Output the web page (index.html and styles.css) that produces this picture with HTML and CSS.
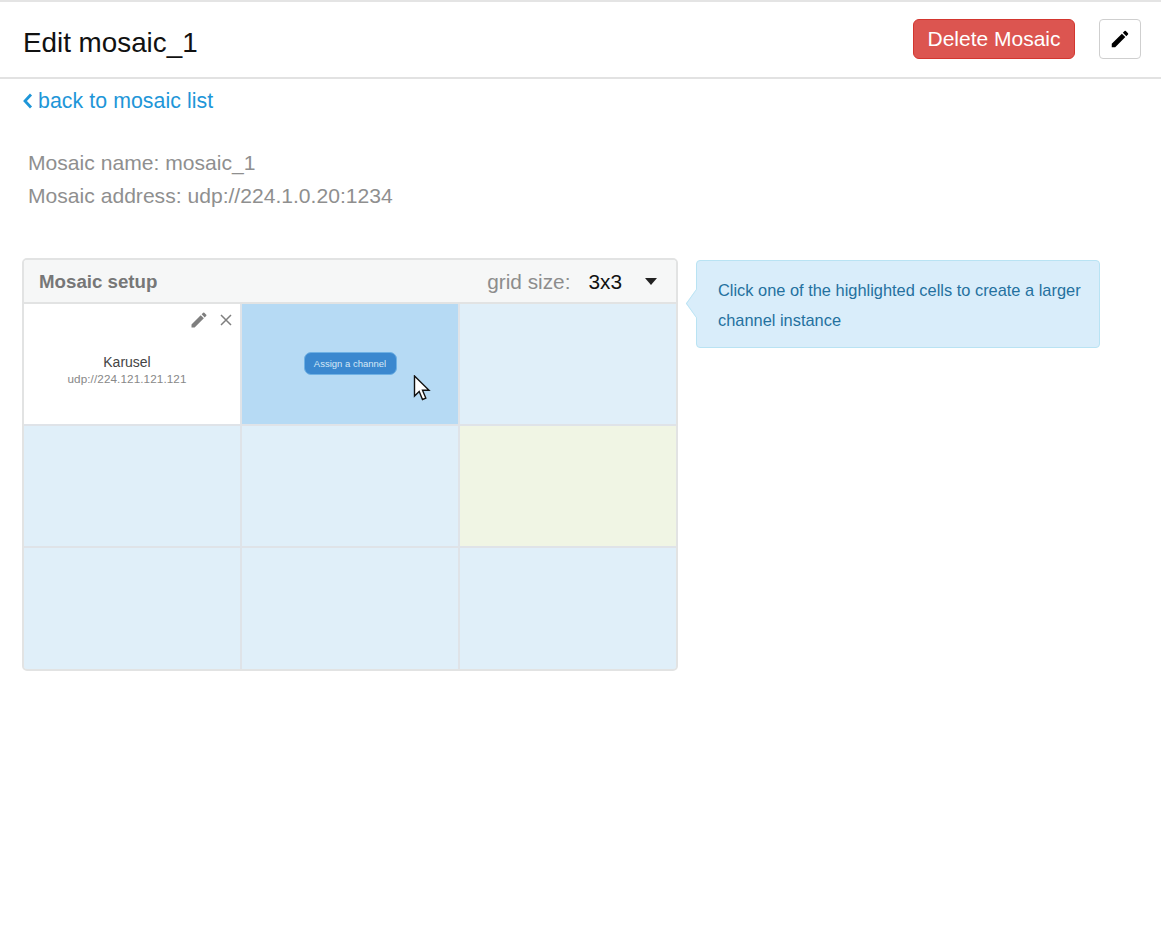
FILE: index.html
```html
<!DOCTYPE html>
<html lang="en">
<head>
<meta charset="utf-8">
<title>Edit mosaic_1</title>
<link rel="stylesheet" href="styles.css">
</head>
<body>
<header class="topbar">
  <h1 class="title">Edit mosaic_1</h1>
  <div class="actions">
    <button class="btn-delete">Delete Mosaic</button>
    <button class="btn-edit" aria-label="Edit">
      <svg width="22" height="22" viewBox="0 0 24 24"><path fill="#000" d="M3 17.25V21h3.75L17.81 9.94l-3.75-3.75L3 17.25zM20.71 7.04a1 1 0 0 0 0-1.41l-2.34-2.34a1 1 0 0 0-1.41 0l-1.83 1.83 3.75 3.75 1.83-1.83z"/></svg>
    </button>
  </div>
</header>
<main class="content">
  <a class="back" href="#">
    <svg class="back-icon" width="11" height="16" viewBox="0 0 11 16"><path d="M9 1.500 3 8l6 6.500" fill="none" stroke="#1e96d8" stroke-width="2.800"/></svg>
    back to mosaic list
  </a>
  <div class="info">
    <p>Mosaic name: mosaic_1</p>
    <p>Mosaic address: udp://224.1.0.20:1234</p>
  </div>
  <div class="workspace">
    <section class="panel">
      <div class="panel-head">
        <span class="panel-title">Mosaic setup</span>
        <div class="grid-size">
          <span class="grid-label">grid size:</span>
          <span class="grid-value">3x3</span>
          <span class="caret"></span>
        </div>
      </div>
      <div class="cells">
        <div class="cell cell-filled">
          <div class="cell-tools">
            <svg width="20" height="20" viewBox="0 0 24 24"><path fill="#7f7f7f" d="M3 17.250V21h3.750L17.810 9.940l-3.750-3.750L3 17.250zM20.710 7.040a1 1 0 0 0 0-1.410l-2.340-2.340a1 1 0 0 0-1.410 0l-1.830 1.830 3.750 3.750 1.830-1.830z"/></svg>
            <svg width="14" height="14" viewBox="0 0 14 14"><path d="M2 2l10 10M12 2 2 12" stroke="#7f7f7f" stroke-width="1.500" fill="none"/></svg>
          </div>
          <div class="channel-name">Karusel</div>
          <div class="channel-addr">udp://224.121.121.121</div>
        </div>
        <div class="cell cell-active">
          <button class="btn-assign">Assign a channel</button>
          <svg class="cursor" width="18" height="27" viewBox="0 0 18 27"><path d="M1.500 1v20l4.700-4.500 3.300 8 3.300-1.400-3.300-7.800h6.500z" fill="#fff" stroke="#111" stroke-width="1.400"/></svg>
        </div>
        <div class="cell"></div>
        <div class="cell"></div>
        <div class="cell"></div>
        <div class="cell cell-green"></div>
        <div class="cell"></div>
        <div class="cell"></div>
        <div class="cell"></div>
      </div>
    </section>
    <aside class="hint">Click one of the highlighted cells to create a larger channel instance</aside>
  </div>
</main>
</body>
</html>
```
FILE: styles.css
```css
* { box-sizing: border-box; }
html, body { margin: 0; padding: 0; }
body {
  background: #fff;
  font-family: "Liberation Sans", Arial, sans-serif;
  color: #000;
  min-height: 931px;
}
.topbar {
  height: 79px;
  border-top: 2px solid #e4e4e4;
  border-bottom: 2px solid #e2e2e2;
  padding: 0 20px 0 23px;
  display: flex;
  align-items: center;
  justify-content: space-between;
}
.title { margin: 6px 0 0; font-size: 27.800px; font-weight: 400; line-height: 34px; color: #111; }
.actions { display: flex; align-items: center; gap: 24px; margin-top: -2px; }
.btn-delete {
  width: 162px;
  height: 40px;
  background: #dc5550;
  border: 1px solid #d3362f;
  border-radius: 6px;
  color: #fff;
  font: 400 21px "Liberation Sans", Arial, sans-serif;
  padding: 0;
}
.btn-edit {
  width: 42px;
  height: 40px;
  background: #fff;
  border: 1px solid #cfcfcf;
  border-radius: 4px;
  padding: 0;
  display: flex;
  align-items: center;
  justify-content: center;
}
.content { padding: 0 0 0 22px; }
.back {
  display: flex;
  align-items: center;
  gap: 5px;
  margin-top: 9px;
  height: 26px;
  color: #1e96d8;
  font-size: 21.300px;
  letter-spacing: .07px;
  text-decoration: none;
}
.info { margin: 32px 0 0 6px; color: #8f8f8f; font-size: 21.100px; line-height: 33px; }
.info p { margin: 0; }
.workspace { display: flex; align-items: flex-start; gap: 18px; margin-top: 46px; }
.panel {
  width: 656px;
  border: 2px solid #e2e3e3;
  border-radius: 5px;
  overflow: hidden;
}
.panel-head {
  height: 44px;
  background: #f6f7f7;
  border-bottom: 2px solid #e2e3e3;
  display: flex;
  align-items: center;
  justify-content: space-between;
  padding: 1px 19px 0 15px;
}
.panel-title { font-size: 18.700px; font-weight: 700; color: #777; }
.grid-size { display: flex; align-items: center; font-size: 20.800px; }
.grid-label { color: #8d8d8d; }
.grid-value { color: #111; margin-left: 18px; }
.caret {
  margin-left: 23px;
  border-left: 6px solid transparent;
  border-right: 6px solid transparent;
  border-top: 7px solid #222;
}
.cells {
  display: grid;
  grid-template-columns: repeat(3, 1fr);
  grid-template-rows: 120px 120px 121px;
  background: #dfe3e8;
  gap: 2px;
}
.cell { background: #e0eff9; position: relative; }
.cell-filled {
  background: #fff;
  display: flex;
  flex-direction: column;
  align-items: center;
  justify-content: center;
  padding: 12px 10px 0 0;
}
.cell-tools {
  position: absolute;
  top: 6px;
  right: 7px;
  display: flex;
  align-items: center;
  gap: 10px;
}
.channel-name { font-size: 14px; color: #444; line-height: 17px; }
.channel-addr { font-size: 11.700px; color: #888; line-height: 15px; letter-spacing: .1px; }
.cell-active {
  background: #b6daf4;
  display: flex;
  align-items: center;
  justify-content: center;
}
.cell-green { background: #f0f5e4; }
.btn-assign {
  width: 93px;
  height: 23px;
  margin-bottom: 1px;
  background: #3b88cf;
  border: 1px solid #6fb1e4;
  border-radius: 7px;
  color: #d5e8f7;
  font: 400 9.500px "Liberation Sans", Arial, sans-serif;
  padding: 0;
}
.cursor { position: absolute; left: 171px; top: 71px; }
.hint {
  position: relative;
  width: 404px;
  height: 88px;
  margin-top: 2px;
  background: #d9edfa;
  border: 1px solid #b9e3f3;
  border-radius: 4px;
  color: #24719f;
  font-size: 16.400px;
  line-height: 30px;
  padding: 14px 12px 0 21px;
}
.hint::before {
  content: "";
  position: absolute;
  left: -11px;
  top: 32px;
  width: 20px;
  height: 20px;
  background: #d9edfa;
  border-left: 1px solid #b9e3f3;
  border-bottom: 1px solid #b9e3f3;
  transform: scaleX(.71) rotate(45deg);
}
```
